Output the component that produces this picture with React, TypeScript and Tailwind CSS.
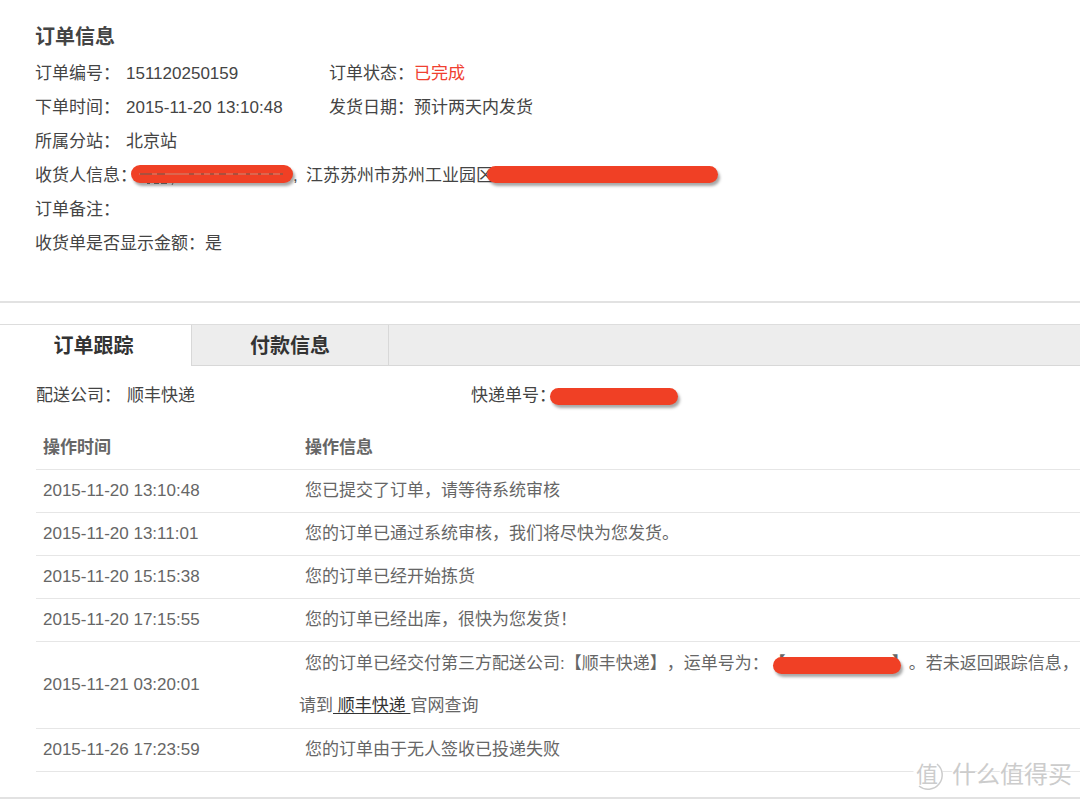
import { ReactNode, useState } from "react";

const logs = [
  { time: "2015-11-20 13:10:48", info: "您已提交了订单，请等待系统审核" },
  { time: "2015-11-20 13:11:01", info: "您的订单已通过系统审核，我们将尽快为您发货。" },
  { time: "2015-11-20 15:15:38", info: "您的订单已经开始拣货" },
  { time: "2015-11-20 17:15:55", info: "您的订单已经出库，很快为您发货！" },
];

const tabs = ["订单跟踪", "付款信息"];

const Mask = ({ className, children }: { className: string; children?: ReactNode }) => (
  <span className={`shrink-0 rounded-full bg-[#f04025] shadow-[2px_3px_3px_rgba(0,0,0,0.35)] ${className}`}>
    {children}
  </span>
);

const Field = ({ label, className = "", children }: { label: string; className?: string; children?: ReactNode }) => (
  <div className="flex items-center">
    <dt className="whitespace-nowrap">{label}</dt>
    <dd className={`flex items-center whitespace-nowrap ${className}`}>{children}</dd>
  </div>
);

const OrderInfo = () => (
  <section className="border-b-2 border-[#e2e2e2] px-[35px] pt-5 pb-10">
    <h2 className="text-xl leading-[34px] font-bold text-[#444]">订单信息</h2>
    <dl className="mt-[3px] leading-[34px]">
      <div className="flex">
        <div className="w-[294px] shrink-0">
          <Field label="订单编号：" className="pl-[6px]">151120250159</Field>
        </div>
        <Field label="订单状态："><span className="text-[#f04030]">已完成</span></Field>
      </div>
      <div className="flex">
        <div className="w-[294px] shrink-0">
          <Field label="下单时间：" className="pl-[6px]">2015-11-20 13:10:48</Field>
        </div>
        <Field label="发货日期：">预计两天内发货</Field>
      </div>
      <Field label="所属分站：" className="pl-[6px]">北京站</Field>
      <div className="flex items-center">
        <dt className="w-24 shrink-0 whitespace-nowrap">收货人信息：</dt>
        <dd className="flex items-center whitespace-nowrap">
          <Mask className="mb-1 h-[18px] w-[162px]">
            <svg viewBox="0 0 162 20" className="block h-5 w-full" fill="none">
              <path d="M8 9h144" stroke="#c98a78" />
              <path d="M9 9h12M26 9h8M58 9h5M70 9h3M79 9h4M88 9h7M102 9h5M115 9h4M127 9h3M138 9h4M149 9h3" stroke="#7a3a2c" />
              <path d="M16 18.5h3M23 18.5h5M30 18.5h6M42 18l-1 2" stroke="#555" />
            </svg>
          </Mask>
          <span className="w-[13px]">,</span>
          江苏苏州市苏州工业园区
          <Mask className="mb-1 -ml-[6px] h-[17px] w-[231px]" />
        </dd>
      </div>
      <Field label="订单备注：" />
      <Field label="收货单是否显示金额：">是</Field>
    </dl>
  </section>
);

const LogTable = () => (
  <table className="w-full table-fixed text-left leading-[42px] text-[#666]">
    <thead>
      <tr className="border-b border-[#e6e6e6]">
        <th scope="col" className="w-[263px] pl-[7px] font-bold">操作时间</th>
        <th scope="col" className="indent-[6px] font-bold">操作信息</th>
      </tr>
    </thead>
    <tbody>
      {logs.map((log) => (
        <tr key={log.time} className="border-b border-[#e6e6e6]">
          <td className="pl-[7px]">{log.time}</td>
          <td className="indent-[6px]">{log.info}</td>
        </tr>
      ))}
      <tr className="border-b border-[#e6e6e6]">
        <td className="pl-[7px]">2015-11-21 03:20:01</td>
        <td className="py-px">
          <div className="flex items-center pl-[6px] whitespace-nowrap">
            您的订单已经交付第三方配送公司:【顺丰快递】，运单号为：
            <span className="relative w-[140px]">
              <span className="flex justify-between"><span>【</span><span>】</span></span>
              <Mask className="absolute top-[14px] left-1 h-[17px] w-[128px]" />
            </span>
            。若未返回跟踪信息，
          </div>
          <div>
            请到<a href="#" className="text-[#333] underline underline-offset-2">&nbsp;顺丰快递&nbsp;</a>官网查询
          </div>
        </td>
      </tr>
      <tr className="border-b border-[#e6e6e6]">
        <td className="pl-[7px]">2015-11-26 17:23:59</td>
        <td className="indent-[6px]">您的订单由于无人签收已投递失败</td>
      </tr>
    </tbody>
  </table>
);

const Watermark = () => (
  <div className="absolute right-2 bottom-[6px] flex items-center gap-2 text-[#ccc]">
    <svg viewBox="0 0 32 32" className="size-8" fill="none" stroke="currentColor">
      <circle cx="16" cy="16" r="15" fill="#fff" stroke="none" />
      <path d="M25 5a14 14 0 1 1-18 22" strokeWidth="1.5" />
      <text x="15" y="23" fontSize="22" textAnchor="middle" fill="currentColor" stroke="none">值</text>
    </svg>
    <span className="text-2xl leading-8 [text-shadow:-1px_-1px_0_#fff]">什么值得买</span>
  </div>
);

export default function App() {
  const [active, setActive] = useState(0);

  return (
    <main className="overflow-hidden bg-white font-['Liberation_Sans','Noto_Sans_CJK_SC',sans-serif] text-[17px] text-[#444] [text-spacing-trim:space-all]">
      <OrderInfo />
      <section className="relative mt-[21px] border-b-2 border-[#e2e2e2] pb-[25px]">
        <div role="tablist" className="flex border-t border-[#ddd] bg-[#ededed]">
          {tabs.map((tab, i) => (
            <button
              key={tab}
              type="button"
              role="tab"
              aria-selected={active === i}
              onClick={() => setActive(i)}
              className={`h-[41px] border-r border-[#d8d8d8] pt-px text-xl font-bold text-[#333] ${i === 0 ? "w-[192px] pr-1" : "w-[197px]"} ${active === i ? "bg-white" : "border-b"}`}
            >
              {tab}
            </button>
          ))}
          <div className="flex-1 border-b border-[#d8d8d8]" />
        </div>
        <dl className="flex pt-[13px] pb-[14px] pl-9 leading-[34px]">
          <div className="w-[435px] shrink-0">
            <Field label="配送公司：" className="pl-[6px]">顺丰快递</Field>
          </div>
          <div className="flex items-center">
            <dt className="w-[79px] whitespace-nowrap">快递单号：</dt>
            <dd className="flex"><Mask className="h-[17px] w-[128px]" /></dd>
          </div>
        </dl>
        <div className="pl-9">
          <LogTable />
        </div>
        <Watermark />
      </section>
    </main>
  );
}
